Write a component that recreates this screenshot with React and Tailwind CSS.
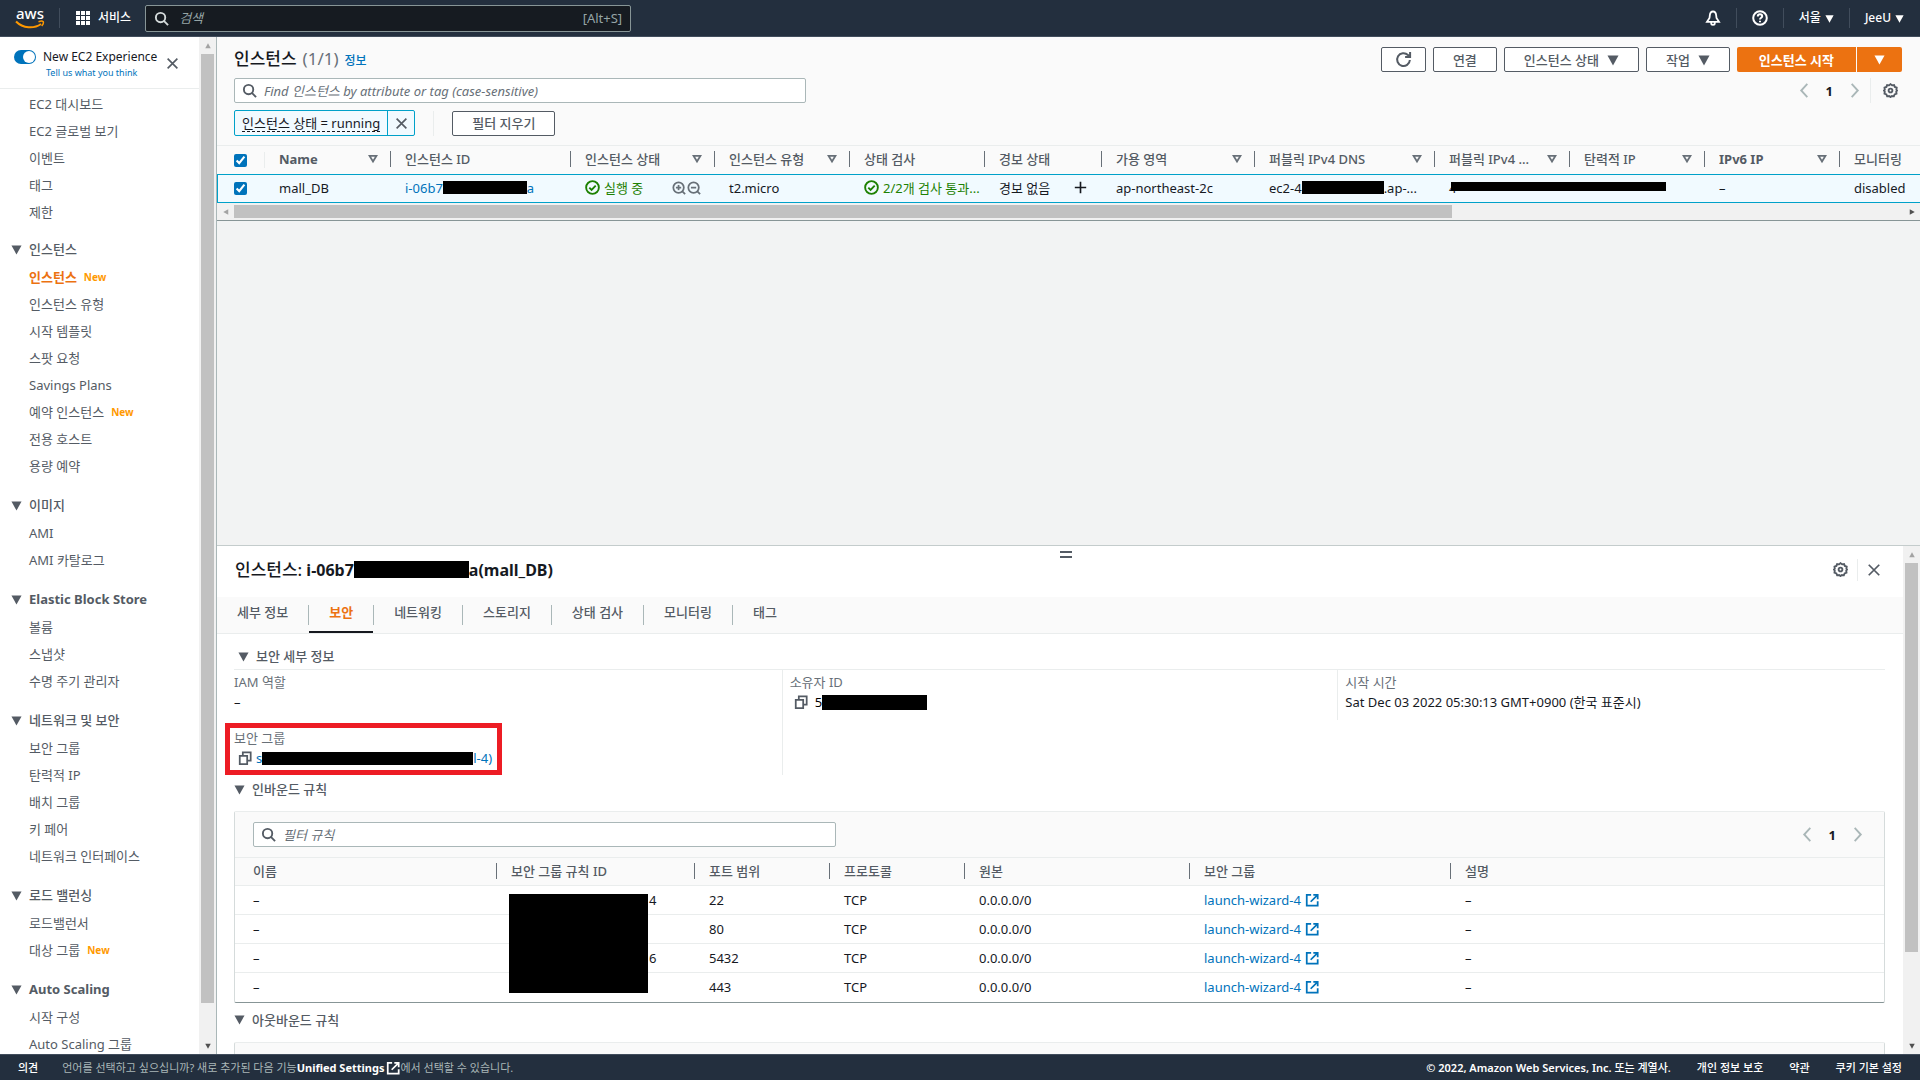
import React, { useState } from 'react';

const navGroups = [
  {
    items: [
      { label: 'EC2 대시보드' },
      { label: 'EC2 글로벌 보기' },
      { label: '이벤트' },
      { label: '태그' },
      { label: '제한' },
    ],
  },
  {
    title: '인스턴스',
    items: [
      { label: '인스턴스', isNew: true, active: true },
      { label: '인스턴스 유형' },
      { label: '시작 템플릿' },
      { label: '스팟 요청' },
      { label: 'Savings Plans' },
      { label: '예약 인스턴스', isNew: true },
      { label: '전용 호스트' },
      { label: '용량 예약' },
    ],
  },
  { title: '이미지', items: [{ label: 'AMI' }, { label: 'AMI 카탈로그' }] },
  {
    title: 'Elastic Block Store',
    items: [{ label: '볼륨' }, { label: '스냅샷' }, { label: '수명 주기 관리자' }],
  },
  {
    title: '네트워크 및 보안',
    items: [
      { label: '보안 그룹' },
      { label: '탄력적 IP' },
      { label: '배치 그룹' },
      { label: '키 페어' },
      { label: '네트워크 인터페이스' },
    ],
  },
  { title: '로드 밸런싱', items: [{ label: '로드밸런서' }, { label: '대상 그룹', isNew: true }] },
  { title: 'Auto Scaling', items: [{ label: '시작 구성' }, { label: 'Auto Scaling 그룹' }] },
];

const instanceColumns = [
  { label: 'Name', width: 'w-[126px]', sortable: true },
  { label: '인스턴스 ID', width: 'w-[180px]' },
  { label: '인스턴스 상태', width: 'w-[144px]', sortable: true },
  { label: '인스턴스 유형', width: 'w-[135px]', sortable: true },
  { label: '상태 검사', width: 'w-[135px]' },
  { label: '경보 상태', width: 'w-[117px]' },
  { label: '가용 영역', width: 'w-[153px]', sortable: true },
  { label: '퍼블릭 IPv4 DNS', width: 'w-[180px]', sortable: true },
  { label: '퍼블릭 IPv4 ...', width: 'w-[135px]', sortable: true },
  { label: '탄력적 IP', width: 'w-[135px]', sortable: true },
  { label: 'IPv6 IP', width: 'w-[135px]', sortable: true },
  { label: '모니터링', width: '' },
];

const ruleColumns = [
  { label: '이름', width: 'w-[262px]' },
  { label: '보안 그룹 규칙 ID', width: 'w-[198px]' },
  { label: '포트 범위', width: 'w-[135px]' },
  { label: '프로토콜', width: 'w-[135px]' },
  { label: '원본', width: 'w-[225px]' },
  { label: '보안 그룹', width: 'w-[261px]' },
  { label: '설명', width: '' },
];

const rules = [
  { port: '22', tail: '4' },
  { port: '80', tail: '' },
  { port: '5432', tail: '6' },
  { port: '443', tail: '' },
];

const tabs = ['세부 정보', '보안', '네트워킹', '스토리지', '상태 검사', '모니터링', '태그'];

const weightOf = (label) => (/^[\x20-\x7e]+$/.test(label) ? 'font-bold' : 'font-medium');

/* ---------- icons ---------- */

const Icon = ({ className = 'size-4', strokeWidth = 2, children }) => (
  <svg
    viewBox="0 0 16 16"
    fill="none"
    stroke="currentColor"
    strokeWidth={strokeWidth}
    className={`shrink-0 ${className}`}
    aria-hidden="true"
  >
    {children}
  </svg>
);

const SearchIcon = ({ className }) => (
  <Icon className={className}>
    <circle cx="7" cy="7" r="5" />
    <path d="M10.5 10.5 15 15" />
  </Icon>
);

const CloseIcon = ({ className }) => (
  <Icon className={className} strokeWidth={2}>
    <path d="m2 2 12 12M14 2 2 14" />
  </Icon>
);

const CaretIcon = ({ className = 'size-3' }) => (
  <svg viewBox="0 0 12 12" fill="currentColor" className={`shrink-0 ${className}`} aria-hidden="true">
    <path d="M.5 1.500h11L6 11.500z" />
  </svg>
);

const SortIcon = () => (
  <Icon className="size-[10px] text-[#687078]" strokeWidth={3}>
    <path d="M2.500 3h11L8 12z" />
  </Icon>
);

const CheckCircleIcon = () => (
  <Icon className="size-[15px]" strokeWidth={2}>
    <circle cx="8" cy="8" r="6.8" />
    <path d="m4.6 8.2 2.4 2.4 4.4-4.6" />
  </Icon>
);

const ZoomGlyph = ({ plus }) => (
  <Icon className="size-[14px] text-[#687078]" strokeWidth={2}>
    <circle cx="7.5" cy="7.5" r="6" />
    <path d="m11.8 11.8 3.2 3.2M4.5 7.5h6" />
    {plus && <path d="M7.5 4.5v6" />}
  </Icon>
);

const CopyIcon = () => (
  <Icon className="size-[14px] text-[#545b64]" strokeWidth={2}>
    <path d="M2 5.500h8.500V15H2z" />
    <path d="M5.500 5.500V1.500H14.500V11H10.500" />
  </Icon>
);

const ExternalIcon = ({ className = 'size-[14px]' }) => (
  <Icon className={className}>
    <path d="M7 2H2v12.500h12.500V9.500" />
    <path d="M9.500 2H14.500V7M14.200 2.300 6.500 10" />
  </Icon>
);

const GearIcon = () => (
  <Icon className="size-[15px]" strokeWidth={2}>
    <path d="M8 1.200l1.700 1.300 2.100-.3.800 2 2 .8-.3 2.100L15 8l-.9 1.300.3 2.100-2 .8-.8 2-2.100-.3L8 15l-1.500-1.100-2.100.3-.8-2-2-.8.3-2.100L1 8l.9-.9-.3-2.100 2-.8.8-2 2.100.3z" />
    <circle cx="8" cy="8" r="2" />
  </Icon>
);

const ChevronIcon = ({ right }) => (
  <Icon className="size-[15px] text-[#aab7b8]" strokeWidth={2}>
    <path d={right ? 'm5 1 6.500 7L5 15' : 'M11 1 4.500 8 11 15'} />
  </Icon>
);

const BellIcon = () => (
  <Icon className="size-4" strokeWidth={1.8}>
    <path d="M8 1.500c-2 0-3 1.700-3.200 4L4.500 8 2 11.800h12L11.500 8l-.3-2.500c-.2-2.300-1.200-4-3.200-4z" />
    <path d="M6.200 12v1.200c0 1 .8 1.600 1.800 1.600s1.800-.6 1.800-1.600V12" />
  </Icon>
);

const HelpIcon = () => (
  <Icon className="size-4" strokeWidth={2}>
    <circle cx="8" cy="8" r="6.800" />
    <path d="M5.800 6.500c0-1.400 1-2.200 2.200-2.200s2.200.8 2.200 2c0 1.500-2.200 1.500-2.200 3.200M8 10.800v1.400" />
  </Icon>
);

const RefreshIcon = () => (
  <Icon className="size-[17px]" strokeWidth={1.900}>
    <path d="M14 8.500A6 6 0 1 1 12.200 3.800L14 5.500" />
    <path d="M14.200 1v4.700H9.500" />
  </Icon>
);

const AwsLogo = () => (
  <a href="#home" aria-label="aws" className="flex w-[30px] flex-col items-center text-white">
    <span className="text-[15px] font-medium leading-[13px]">aws</span>
    <svg viewBox="0 0 30 9" className="h-[9px] w-[30px]" fill="none" stroke="#f90" aria-hidden="true">
      <path d="M1 1.500C8 8.500 19 9 26 4" strokeWidth="2" />
      <path d="M23.500 1.700c2-.7 4-.7 4.600-.2.500.8 0 3-1.400 4.600" strokeWidth="1.500" />
    </svg>
  </a>
);

/* ---------- small parts ---------- */

const Redacted = ({ className }) => <span className={`inline-block shrink-0 bg-black ${className}`} />;

const Divider = ({ className = 'h-5 bg-[#414d5c]' }) => <span className={`w-px shrink-0 ${className}`} />;

// column separator drawn at the right end of a header cell
const HeadCell = ({ label, width, sortable, last, padding = 'pl-[14px]' }) => (
  <th scope="col" className={`h-7 p-0 pb-[2px] text-left ${weightOf(label)} ${width}`}>
    <div className={`flex items-center ${padding}`}>
      <span className="grow truncate">{label}</span>
      {sortable && <SortIcon />}
      <span className={`ml-3 h-4 w-px ${last ? '' : 'bg-[#687078]'}`} />
    </div>
  </th>
);

const ScrollY = ({ thumb }) => (
  <div className="flex w-[17px] shrink-0 flex-col items-center bg-[#f1f1f1]">
    <span className="flex h-[17px] items-center text-[#a3a3a3]">
      <CaretIcon className="h-[6px] w-[10px] rotate-180" />
    </span>
    <div className="flex w-[13px] grow flex-col">
      <span className={`bg-[#c1c1c1] ${thumb}`} />
    </div>
    <span className="flex h-[17px] items-center text-[#505050]">
      <CaretIcon className="h-[6px] w-[10px]" />
    </span>
  </div>
);

const Pager = () => (
  <div className="flex items-center gap-[14px]">
    <button type="button" aria-label="이전 페이지"><ChevronIcon /></button>
    <span className="font-bold text-[#16191f]">1</span>
    <button type="button" aria-label="다음 페이지"><ChevronIcon right /></button>
  </div>
);

const Button = ({ children, className = 'px-[19px]', ...rest }) => (
  <button
    type="button"
    className={`flex h-[25px] items-center gap-2 rounded-xs border border-[#545b64] bg-white font-medium text-[#545b64] ${className}`}
    {...rest}
  >
    {children}
  </button>
);

/* ---------- page ---------- */

const TopBar = () => (
  <header className="flex h-[37px] shrink-0 items-center border-b border-[#414d5c] bg-[#232f3e] pl-[15px] text-[12px] text-white">
    <AwsLogo />
    <Divider className="ml-[14px] h-5 bg-[#414d5c]" />
    <button type="button" className="ml-4 flex items-center gap-2 font-medium">
      <svg viewBox="0 0 14 14" fill="currentColor" className="size-[14px]" aria-hidden="true">
        {[0, 5, 10].map((y) => [0, 5, 10].map((x) => <rect key={`${x}-${y}`} x={x} y={y} width="4" height="4" />))}
      </svg>
      서비스
    </button>
    <label className="ml-[14px] flex h-[27px] w-[486px] items-center gap-[10px] rounded-xs border border-[#879596] bg-[#161b21] px-[8px] text-[13px]">
      <SearchIcon className="size-[15px] text-[#d5dbdb]" />
      <input
        type="text"
        aria-label="검색"
        placeholder="검색"
        className="min-w-0 grow bg-transparent italic outline-none placeholder:text-[#95a5a6]"
      />
      <span className="text-[#95a5a6]">[Alt+S]</span>
    </label>
    <div className="ml-auto flex items-center gap-[15px] pr-4 font-medium">
      <button type="button" aria-label="알림"><BellIcon /></button>
      <Divider />
      <button type="button" aria-label="도움말"><HelpIcon /></button>
      <Divider />
      <button type="button" className="flex items-center gap-1">서울 <CaretIcon className="size-[9px]" /></button>
      <Divider />
      <button type="button" className="flex items-center gap-1">JeeU <CaretIcon className="size-[9px]" /></button>
    </div>
  </header>
);

const SideNav = () => (
  <aside className="flex w-[217px] shrink-0 border-r border-[#aab7b8]">
    <nav className="flex grow flex-col overflow-hidden bg-white text-[#545b64]">
      <div className="flex shrink-0 items-center justify-between border-b border-[#eaeded] pb-[9px] pl-[14px] pr-5 pt-[10px]">
        <div>
          <div className="flex items-center gap-[7px]">
            <button
              type="button"
              role="switch"
              aria-checked="true"
              aria-label="New EC2 Experience"
              className="flex h-[14px] w-[22px] items-center justify-end rounded-full bg-[#0073bb] pr-px"
            >
              <span className="size-3 rounded-full bg-white" />
            </button>
            <span className="whitespace-nowrap text-[12px] leading-5 text-[#16191f]">New EC2 Experience</span>
          </div>
          <a href="#feedback" className="block pl-8 text-[9px] leading-3 text-[#0073bb]">Tell us what you think</a>
        </div>
        <button type="button" aria-label="닫기" className="text-[#545b64]"><CloseIcon className="size-[13px]" /></button>
      </div>
      <div className="mt-px shrink-0">
        {navGroups.map((group) => (
          <div key={group.title || 'top'} className="pb-3 first:pb-[10px]">
            {group.title && (
              <button type="button" className="flex h-7 items-center gap-[7px] pl-[11px] font-bold">
                <CaretIcon className="size-[11px]" />
                <span className={weightOf(group.title)}>{group.title}</span>
              </button>
            )}
            <ul>
              {group.items.map((item) => (
                <li key={item.label} className="flex h-[27px] items-center gap-[7px] pl-[29px]">
                  <a href="#nav" className={item.active ? 'font-bold text-[#ec7211]' : ''}>{item.label}</a>
                  {item.isNew && <span className="pt-px text-[10px] font-bold leading-4 text-[#ff9900]">New</span>}
                </li>
              ))}
            </ul>
          </div>
        ))}
      </div>
    </nav>
    <ScrollY thumb="mb-[34px] grow" />
  </aside>
);

const InstanceTable = () => {
  const [selected, setSelected] = useState(true);
  const cell = 'h-[29px] border-y border-[#00a1c9] p-0 pb-[2px] pl-[14px]';

  return (
    <table className="w-full table-fixed border-separate border-spacing-0 whitespace-nowrap">
      <thead className="text-[#545b64]">
        <tr>
          <th scope="col" className="w-[48px] p-0 pl-[17px]">
            <div className="flex items-center justify-between">
              <input type="checkbox" aria-label="모두 선택" checked={selected} onChange={() => setSelected(!selected)} className="size-[13px] accent-[#0073bb]" />
              <Divider className="h-4 bg-[#eaeded]" />
            </div>
          </th>
          {instanceColumns.map((col, i) => (
            <HeadCell key={col.label} {...col} last={i === instanceColumns.length - 1} />
          ))}
        </tr>
      </thead>
      <tbody className="bg-[#f1faff] text-[#16191f]">
        <tr>
          <td className="h-[29px] border-y border-l border-[#00a1c9] p-0 pl-4">
            <input type="checkbox" aria-label="mall_DB" checked={selected} onChange={() => setSelected(!selected)} className="block size-[13px] accent-[#0073bb]" />
          </td>
          <td className={cell}>mall_DB</td>
          <td className={cell}>
            <a href="#instance" className="flex items-center text-[#0073bb]">i-06b7<Redacted className="h-[13px] w-[84px]" />a</a>
          </td>
          <td className={cell}>
            <div className="flex items-center gap-1 text-[#1d8102]">
              <CheckCircleIcon />
              <span className="grow">실행 중</span>
              <span className="mr-[14px] flex gap-px"><ZoomGlyph plus /><ZoomGlyph /></span>
            </div>
          </td>
          <td className={cell}>t2.micro</td>
          <td className={cell}>
            <div className="flex items-center gap-1 text-[#1d8102]">
              <CheckCircleIcon />
              <span>2/2개 검사 통과...</span>
            </div>
          </td>
          <td className={cell}>
            <div className="flex items-center justify-between pr-[15px]">
              경보 없음
              <button type="button" aria-label="경보 추가"><Icon className="size-[13px]"><path d="M8 1v14M1 8h14" /></Icon></button>
            </div>
          </td>
          <td className={cell}>ap-northeast-2c</td>
          <td className={cell}>
            <div className="flex items-center">ec2-4<Redacted className="h-[13px] w-[82px]" />.ap-...</div>
          </td>
          <td className={`${cell} relative`}>
            4
            <Redacted className="absolute left-4 top-[7px] h-[9px] w-[215px]" />
          </td>
          <td className={cell} />
          <td className={cell}>–</td>
          <td className={cell}>disabled</td>
        </tr>
      </tbody>
    </table>
  );
};

const InstanceList = () => (
  <section className="flex min-h-0 flex-1 flex-col bg-[#f2f3f3]">
    <div className="border-b border-[#879596] bg-[#fafafa]">
      <div className="flex items-center justify-between pl-[17px] pr-[18px] pt-[10px]">
        <h1 className="flex h-[25px] items-baseline gap-[6px] text-[17px] font-medium leading-6 text-[#16191f]">
          인스턴스 <span className="font-normal text-[#687078]">(1/1)</span>
          <a href="#info" className="text-[12px] text-[#0073bb]">정보</a>
        </h1>
        <div className="flex gap-[7px]">
          <Button aria-label="새로 고침" className="px-[13px]"><RefreshIcon /></Button>
          <Button>연결</Button>
          <Button>인스턴스 상태 <CaretIcon /></Button>
          <Button>작업 <CaretIcon /></Button>
          <div className="flex gap-px text-white">
            <button type="button" className="h-[25px] rounded-l-xs bg-[#ec7211] px-[22px] font-bold">인스턴스 시작</button>
            <button type="button" aria-label="시작 옵션" className="h-[25px] rounded-r-xs bg-[#ec7211] px-[17px]"><CaretIcon className="size-[11px]" /></button>
          </div>
        </div>
      </div>

      <div className="mt-[6px] flex items-center justify-between pl-[17px] pr-[22px]">
        <label className="flex h-[25px] w-[572px] items-center gap-[7px] rounded-xs border border-[#aab7b8] bg-white px-[7px]">
          <SearchIcon className="size-[15px] text-[#545b64]" />
          <input
            type="text"
            aria-label="인스턴스 검색"
            placeholder="Find 인스턴스 by attribute or tag (case-sensitive)"
            className="min-w-0 grow italic outline-none placeholder:text-[#687078]"
          />
        </label>
        <div className="flex items-center gap-2 text-[#545b64]">
          <Pager />
          <Divider className="h-[25px] bg-[#eaeded]" />
          <button type="button" aria-label="기본 설정" className="ml-1"><GearIcon /></button>
        </div>
      </div>

      <div className="mt-[7px] flex items-center pb-[9px] pl-[17px]">
        <div className="flex h-[26px] items-stretch rounded-xs border border-[#00a1c9] bg-[#f1faff] text-[#16191f]">
          <button type="button" className="flex items-center px-[7px]">
            <span className="border-b border-dashed border-[#16191f] leading-4">인스턴스 상태 = running</span>
          </button>
          <button type="button" aria-label="필터 제거" className="flex w-[27px] items-center justify-center border-l border-[#00a1c9] text-[#545b64]">
            <CloseIcon className="size-[13px]" />
          </button>
        </div>
        <Divider className="ml-[18px] mr-[18px] h-[25px] bg-[#eaeded]" />
        <Button>필터 지우기</Button>
      </div>

      <div className="overflow-hidden border-t border-[#eaeded]">
        <InstanceTable />
      </div>
      <div className="flex h-[17px] items-center bg-[#f1f1f1]">
        <span className="flex w-[17px] justify-center text-[#a3a3a3]"><CaretIcon className="h-[6px] w-[10px] rotate-90" /></span>
        <div className="flex h-[13px] grow">
          <span className="w-[73%] bg-[#c1c1c1]" />
        </div>
        <span className="flex w-[17px] justify-center text-[#505050]"><CaretIcon className="h-[6px] w-[10px] -rotate-90" /></span>
      </div>
    </div>
  </section>
);

const RulesTable = () => (
  <div className="rounded-xs border border-[#d5dbdb] border-b-[#879596] border-t-[#eaeded]">
    <div className="flex items-center justify-between bg-[#fafafa] py-[10px] pl-[18px] pr-[19px]">
      <label className="flex h-[25px] w-[583px] items-center gap-[7px] rounded-xs border border-[#aab7b8] bg-white px-[7px]">
        <SearchIcon className="size-[15px] text-[#545b64]" />
        <input type="text" aria-label="필터 규칙" placeholder="필터 규칙" className="min-w-0 grow italic outline-none placeholder:text-[#687078]" />
      </label>
      <Pager />
    </div>
    <table className="w-full table-fixed border-collapse whitespace-nowrap border-t border-[#eaeded]">
      <thead className="bg-[#fafafa] text-[#545b64]">
        <tr>
          {ruleColumns.map((col, i) => (
            <HeadCell key={col.label} {...col} last={i === ruleColumns.length - 1} padding={i === 0 ? 'pl-[18px]' : 'pl-[14px]'} />
          ))}
        </tr>
      </thead>
      <tbody className="text-[#16191f]">
        {rules.map((rule, i) => (
          <tr key={rule.port} className="h-[29px] border-t border-[#eaeded]">
            <td className="p-0 pl-[18px]">–</td>
            <td className="relative p-0 pl-[152px]">
              {rule.tail}
              {/* one mask covers the ids of all four rows */}
              {i === 0 && <Redacted className="absolute left-3 top-2 z-10 h-[99px] w-[139px]" />}
            </td>
            <td className="p-0 pl-[14px]">{rule.port}</td>
            <td className="p-0 pl-[14px]">TCP</td>
            <td className="p-0 pl-[14px]">0.0.0.0/0</td>
            <td className="p-0 pl-[14px]">
              <a href="#group" className="flex items-center gap-1 text-[#0073bb]">launch-wizard-4 <ExternalIcon /></a>
            </td>
            <td className="p-0 pl-[14px]">–</td>
          </tr>
        ))}
      </tbody>
    </table>
  </div>
);

const SectionToggle = ({ children, className = '' }) => (
  <button type="button" className={`flex items-center gap-[7px] font-medium leading-5 text-[#545b64] ${className}`}>
    <CaretIcon className="size-[11px]" />
    {children}
  </button>
);

const DetailPanel = () => {
  const [tab, setTab] = useState('보안');

  return (
    <section className="flex min-h-0 flex-1 border-t border-[#c4cccc] bg-white">
      <div className="min-w-0 grow overflow-hidden">
        <div className="relative flex h-[51px] items-center justify-between pb-1 pl-[18px] pr-[22px]">
          <h2 className="flex items-center text-[16px] font-bold text-[#16191f]">
            <span className="text-[17px] font-medium">인스턴스:</span>&nbsp;i-06b7<Redacted className="h-[17px] w-[115px]" />a(mall_DB)
          </h2>
          <button type="button" aria-label="크기 조정" className="absolute left-1/2 top-1 flex h-[9px] w-3 flex-col justify-between py-px">
            <span className="h-[2px] w-full bg-[#545b64]" />
            <span className="h-[2px] w-full bg-[#545b64]" />
          </button>
          <div className="flex items-center gap-[9px] text-[#545b64]">
            <button type="button" aria-label="패널 설정"><GearIcon /></button>
            <Divider className="h-[22px] bg-[#eaeded]" />
            <button type="button" aria-label="패널 닫기"><CloseIcon className="size-[14px]" /></button>
          </div>
        </div>

        <div role="tablist" className="flex h-[37px] border-b border-[#eaeded] bg-[#fafafa]">
          {tabs.map((name) => (
            <div key={name} className="group flex items-center">
              <button
                type="button"
                role="tab"
                aria-selected={tab === name}
                onClick={() => setTab(name)}
                className={`h-full border-b-2 px-5 pb-1 ${tab === name ? 'border-[#16191f] font-bold text-[#ec7211]' : 'border-transparent font-medium text-[#545b64]'}`}
              >
                {name}
              </button>
              <Divider className="h-5 bg-[#aab7b8] group-last:hidden" />
            </div>
          ))}
        </div>

        <div className="pl-[17px] pr-[18px] pt-3">
          <SectionToggle className="pl-1">보안 세부 정보</SectionToggle>
          <div className="mt-[3px] border-t border-[#eaeded]">
            <dl className="-mx-2 grid grid-cols-3 items-start leading-5">
              <div className="pl-2 pt-[2px]">
                <dt className="text-[#687078]">IAM 역할</dt>
                <dd className="text-[#16191f]">–</dd>
                <div className="-ml-[9px] mt-[11px] w-fit border-[5px] border-[#ed1c24] pb-[2px] pl-1 pr-[5px]">
                  <dt className="text-[#687078]">보안 그룹</dt>
                  <dd>
                    <a href="#sg" className="flex items-center pl-1 text-[#0073bb]">
                      <CopyIcon />
                      <span className="ml-1">s</span>
                      <Redacted className="h-[13px] w-[211px]" />l-4)
                    </a>
                  </dd>
                </div>
              </div>
              <div className="self-stretch border-l border-[#eaeded] pl-[7px] pt-[2px]">
                <dt className="text-[#687078]">소유자 ID</dt>
                <dd className="flex items-center pl-1">
                  <CopyIcon />
                  <span className="ml-[7px]">5</span>
                  <Redacted className="h-[15px] w-[105px]" />
                </dd>
              </div>
              <div className="border-l border-[#eaeded] pb-2 pl-[7px] pt-[2px]">
                <dt className="text-[#687078]">시작 시간</dt>
                <dd className="text-[#16191f]">Sat Dec 03 2022 05:30:13 GMT+0900 (한국 표준시)</dd>
              </div>
            </dl>
          </div>
          <SectionToggle className="mb-3 mt-1">인바운드 규칙</SectionToggle>
          <RulesTable />
          <SectionToggle className="mb-3 mt-[7px]">아웃바운드 규칙</SectionToggle>
          <div className="h-12 rounded-xs border border-[#d5dbdb] border-t-[#eaeded] bg-[#fafafa]" />
        </div>
      </div>
      <ScrollY thumb="h-[82%]" />
    </section>
  );
};

const Footer = () => (
  <footer className="flex h-[26px] shrink-0 items-center justify-between border-t border-[#414d5c] bg-[#232f3e] px-[18px] text-[11px] font-medium leading-4 text-white">
    <div className="flex items-center">
      <button type="button">의견</button>
      <p className="ml-6 flex items-center font-normal text-[#aab7b8]">
        언어를 선택하고 싶으십니까? 새로 추가된 다음 기능
        <a href="#settings" className="flex items-center gap-[2px] font-bold text-white">Unified Settings<ExternalIcon /></a>
        에서 선택할 수 있습니다.
      </p>
    </div>
    <div className="flex items-center gap-[26px]">
      <span className="font-semibold">© 2022, Amazon Web Services, Inc. <span className="font-medium">또는 계열사.</span></span>
      <a href="#privacy">개인 정보 보호</a>
      <a href="#terms">약관</a>
      <a href="#cookies">쿠키 기본 설정</a>
    </div>
  </footer>
);

export default function App() {
  return (
    <div className="flex h-screen flex-col overflow-hidden font-['Noto_Sans','Noto_Sans_CJK_KR',sans-serif] text-[13px] leading-5">
      <TopBar />
      <div className="flex min-h-0 grow">
        <SideNav />
        <main className="flex min-w-0 grow flex-col">
          <InstanceList />
          <DetailPanel />
        </main>
      </div>
      <Footer />
    </div>
  );
}
